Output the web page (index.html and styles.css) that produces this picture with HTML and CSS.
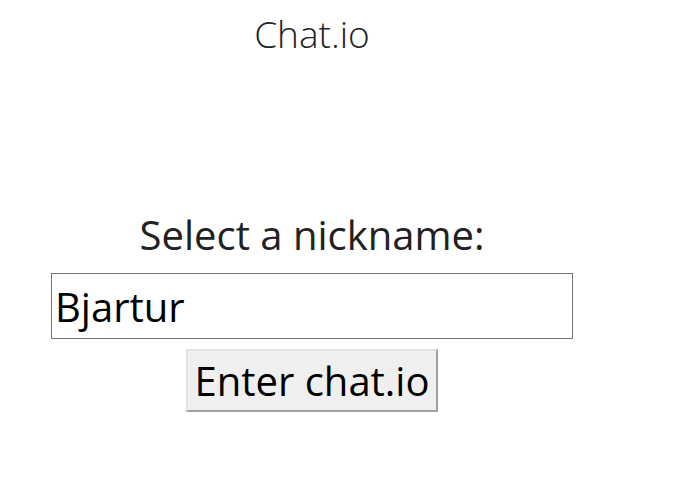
FILE: index.html
```html
<!DOCTYPE html>
<html>
<head>
<meta charset="utf-8">
<link rel="stylesheet" href="styles.css">
<title>Chat.io</title>
</head>
<body>
<div class="page">
  <h1 class="title">Chat.io</h1>
  <form class="login">
    <label class="prompt" for="nick">Select a nickname:</label>
    <input class="nick" id="nick" type="text" value="Bjartur">
    <button class="enter" type="button">Enter chat.io</button>
  </form>
</div>
</body>
</html>
```
FILE: styles.css
```css
html, body {
  margin: 0;
  padding: 0;
  background: #fff;
}
body {
  font-family: "Open Sans", sans-serif;
  color: #222;
}
.page {
  width: 624px;
  display: flex;
  flex-direction: column;
  align-items: center;
}
.title {
  margin: 10px 0 0;
  font-size: 37px;
  font-weight: 300;
  line-height: 48px;
}
.login {
  margin-top: 150px;
  display: flex;
  flex-direction: column;
  align-items: center;
}
.prompt {
  font-size: 40px;
  line-height: 54px;
}
.nick {
  margin-top: 11px;
  box-sizing: border-box;
  width: 522px;
  height: 66px;
  padding: 1px 3px;
  border: 1px solid #767676;
  font-family: "Open Sans", sans-serif;
  font-size: 40px;
  color: #000;
  background: #fff;
}
.enter {
  margin-top: 10px;
  box-sizing: border-box;
  width: 252px;
  height: 63px;
  padding: 0 6px;
  border: 2px solid;
  border-color: #e3e3e3 #a0a0a0 #a0a0a0 #e3e3e3;
  background: #efefef;
  font-family: "Open Sans", sans-serif;
  font-size: 40px;
  color: #000;
}
```
